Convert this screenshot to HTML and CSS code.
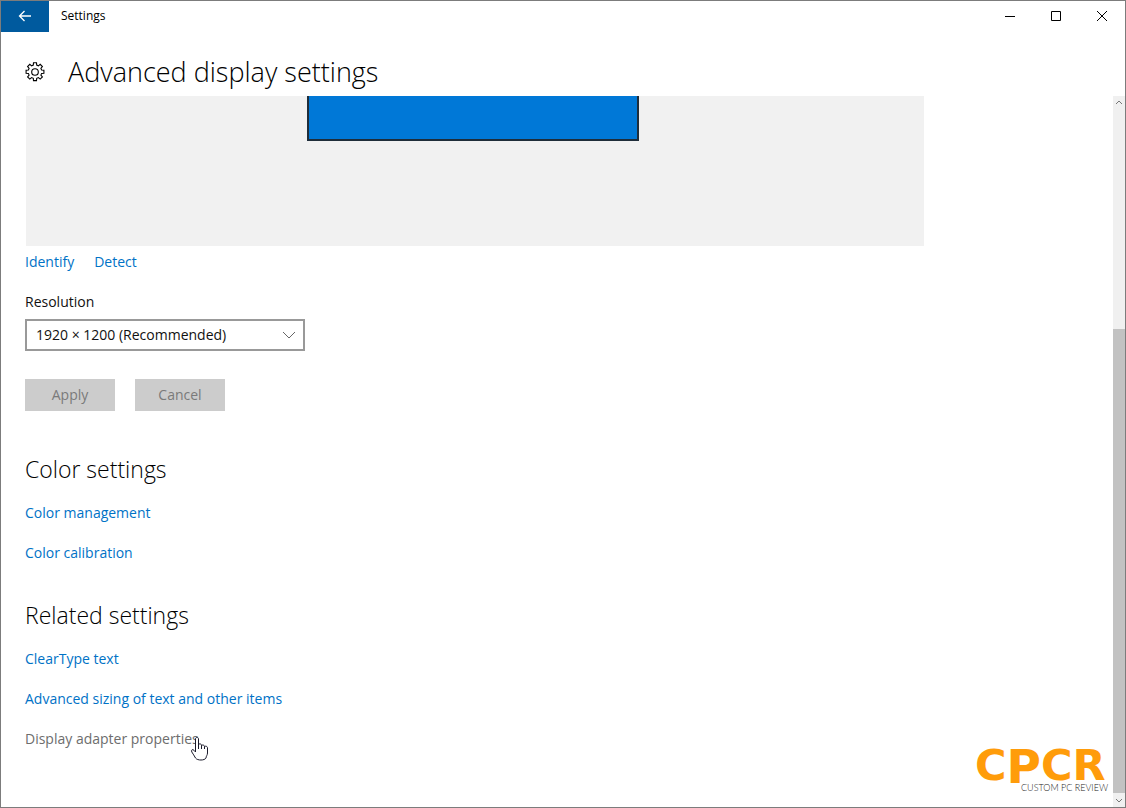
FILE: index.html
```html
<!DOCTYPE html>
<html lang="en">
<head>
<meta charset="UTF-8">
<meta name="viewport" content="width=device-width, initial-scale=1.0">
<title>Settings</title>
<link rel="stylesheet" href="styles.css">
</head>
<body>
<div class="window">
    <div class="titlebar">
        <button class="back" aria-label="Back">
            <svg width="14" height="12" viewBox="0 0 14 12"><path d="M13 6H1.500M6.500 1L1.500 6l5 5"/></svg>
        </button>
        <span class="title">Settings</span>
        <button class="caption" aria-label="Minimize">
            <svg width="12" height="12" viewBox="0 0 12 12"><path d="M1 6.500h10"/></svg>
        </button>
        <button class="caption" aria-label="Maximize">
            <svg width="12" height="12" viewBox="0 0 12 12"><path d="M1.500 1.500h9v9h-9z"/></svg>
        </button>
        <button class="caption" aria-label="Close">
            <svg width="12" height="12" viewBox="0 0 12 12"><path d="M1 1l10 10M11 1L1 11"/></svg>
        </button>
    </div>

    <header class="header">
        <svg class="gear" width="20" height="20" viewBox="0 0 20 20">
            <path d="M8.300 3.100L8.500 .8h3l.2 2.300 1.700.7 1.800-1.500 2.200 2.200-1.500 1.800.7 1.700 2.300.2v3l-2.300.2-.7 1.700 1.500 1.800-2.200 2.200-1.800-1.500-1.700.7-.2 2.300h-3l-.2-2.300-1.700-.7-1.800 1.500-2.200-2.200 1.500-1.800-.7-1.700-2.300-.2v-3l2.300-.2.7-1.700-1.500-1.800 2.200-2.200 1.800 1.500z"/>
            <circle cx="10" cy="10" r="3.300"/>
        </svg>
        <h1>Advanced display settings</h1>
    </header>

    <div class="body">
        <main class="content">
            <div class="preview">
                <div class="monitor"></div>
            </div>
            <div class="display-links">
                <a href="#">Identify</a>
                <a href="#">Detect</a>
            </div>

            <label class="field-label" for="resolution">Resolution</label>
            <div class="select">
                <select id="resolution">
                    <option>1920 × 1200 (Recommended)</option>
                </select>
                <svg class="chevron" width="14" height="8" viewBox="0 0 14 8"><path d="M1 1l6 6 6-6"/></svg>
            </div>
            <div class="actions">
                <button disabled>Apply</button>
                <button disabled>Cancel</button>
            </div>

            <section>
                <h2>Color settings</h2>
                <ul class="links">
                    <li><a href="#">Color management</a></li>
                    <li><a href="#">Color calibration</a></li>
                </ul>
            </section>

            <section>
                <h2>Related settings</h2>
                <ul class="links">
                    <li><a href="#">ClearType text</a></li>
                    <li><a href="#">Advanced sizing of text and other items</a></li>
                    <li>
                        <a class="hovered" href="#">Display adapter properties</a>
                        <svg class="pointer" width="20" height="26" viewBox="0 0 20 26">
                            <path d="M5.500 16V3c0-2.200 3-2.200 3 0v6c0-1.600 3-1.600 3 .3v.7c0-1.500 3-1.300 3 .5v.6c0-1.400 3-1.200 3 .7V17c0 2.200-1.500 3.200-1.500 5-1.300 2.600-8.500 2.800-10.500 0-1-2.200-2.600-4-3.700-6-1.200-2.300 1-3 2.200-1.700z"/>
                            <path d="M8.500 9v4M11.500 10v3M14.500 11v2"/>
                        </svg>
                    </li>
                </ul>
            </section>
        </main>

        <div class="scrollbar">
            <svg width="8" height="5" viewBox="0 0 8 5"><path d="M1 4l3-3 3 3"/></svg>
            <div class="track"><div class="thumb"></div></div>
            <svg width="8" height="5" viewBox="0 0 8 5"><path d="M1 1l3 3 3-3"/></svg>
        </div>
    </div>

    <svg class="brand" width="136" height="52" viewBox="0 0 136 52">
        <text class="brand-name" x="2" y="37">C<tspan class="tall" dy="3">P</tspan><tspan dy="-3">CR</tspan></text>
        <text class="brand-tag" x="48" y="48">CUSTOM PC REVIEW</text>
    </svg>
</div>
</body>
</html>
```

FILE: styles.css
```css
* { box-sizing: border-box; }
body { margin: 0; background: #fff; color: #111; font-family: "Open Sans", "Noto Sans", sans-serif; font-size: 14px; line-height: 20px; }
button, select { font: inherit; color: inherit; border: none; border-radius: 0; padding: 0; }
a { color: #0072c6; text-decoration: none; }
svg { fill: none; stroke: #000; }
h1, h2 { margin: 0; font-weight: 300; line-height: 32px; color: #000; }

.window { position: relative; display: flex; flex-direction: column; min-height: 100vh; border: 1px solid #7c7c7c; }

.titlebar { display: flex; align-items: center; height: 30px; }
.back { align-self: flex-start; width: 48px; height: 31px; background: #005a9e; }
.back svg { stroke: #fff; stroke-width: 1.300; }
.title { flex: 1; margin-left: 12px; font-size: 12px; color: #000; }
.caption { display: flex; align-items: center; justify-content: center; width: 46px; height: 30px; background: none; }

.header { display: flex; align-items: center; gap: 23px; height: 65px; padding: 16px 24px 0; }
.gear { stroke-width: 1.100; }
h1 { font-size: 27px; }

.body { display: flex; flex: 1; }
.content { flex: 1; padding: 0 24px 56px; }
.preview { max-width: 898px; height: 150px; margin-left: 1px; padding-right: 4px; background: #f1f1f1; }
.monitor { width: 332px; max-width: 100%; height: 45px; margin: 0 auto; background: #0078d7; border: 2px solid #1f2d3a; border-top: none; }
.display-links { display: flex; gap: 20px; margin-top: 6px; }
.field-label { display: block; margin-top: 20px; }

.select { position: relative; width: 280px; margin-top: 7px; }
.select select { display: block; width: 100%; height: 32px; padding: 0 9px; background: #fff; border: 2px solid #999; appearance: none; }
.chevron { position: absolute; right: 9px; top: 12px; stroke: #666; pointer-events: none; }

.actions { display: flex; gap: 20px; margin: 28px 0 42px; }
.actions button { width: 90px; height: 32px; background: #ccc; color: #7a7a7a; }

h2 { font-size: 23px; }
section + section { margin-top: 36px; }
.links { display: flex; flex-direction: column; gap: 20px; margin: 18px 0 0; padding: 0; list-style: none; }
.links li { position: relative; }
.hovered { color: #6d6d6d; }
.pointer { position: absolute; left: 165px; top: 7px; fill: #fff; stroke: #1a1a2a; }

.scrollbar { display: flex; flex-direction: column; align-items: center; gap: 5px; width: 12px; padding: 4px 0; background: #f0f0f0; }
.scrollbar svg { stroke: #777; }
.track { display: flex; flex: 1; flex-direction: column; justify-content: flex-end; width: 100%; }
.thumb { height: 68%; background: #c2c2c2; }

.brand { position: absolute; right: 16px; bottom: 12px; stroke: none; }
.brand-name { font: bold 43px "DejaVu Sans", sans-serif; fill: #ff9c0a; }
.brand-name .tall { font-size: 47px; }
.brand-tag { font: 300 9px Lato, sans-serif; fill: #222; }
```
